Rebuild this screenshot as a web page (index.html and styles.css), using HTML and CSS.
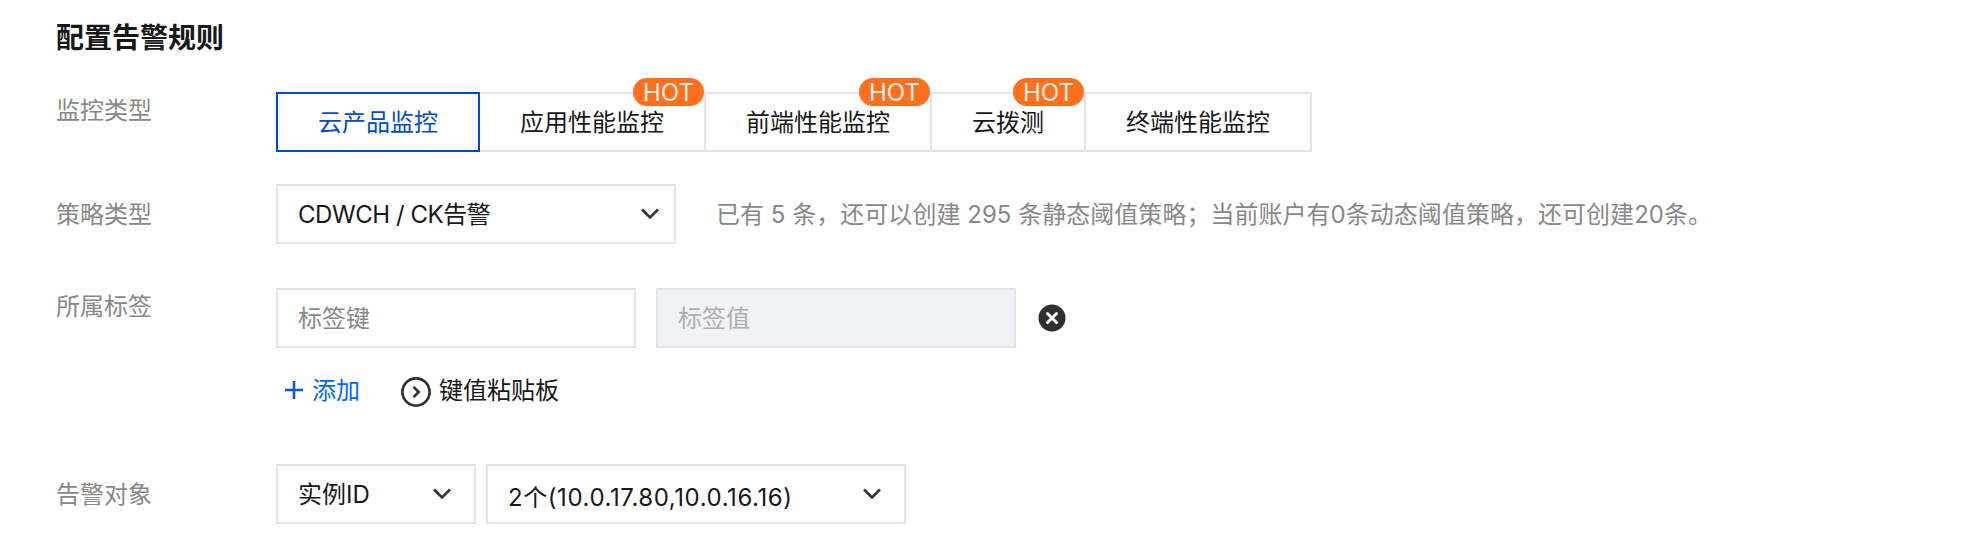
FILE: index.html
```html
<!DOCTYPE html>
<html lang="zh-CN">
<head>
    <meta charset="UTF-8">
    <title>配置告警规则</title>
    <link rel="stylesheet" href="styles.css">
</head>
<body>

    <h1>配置告警规则</h1>

    <div class="form">
        <div class="row row-type">
            <label class="label label-top">监控类型</label>
            <div class="tabs">
                <button class="tab active">云产品监控</button>
                <button class="tab">应用性能监控<span class="hot">HOT</span></button>
                <button class="tab">前端性能监控<span class="hot">HOT</span></button>
                <button class="tab">云拨测<span class="hot">HOT</span></button>
                <button class="tab">终端性能监控</button>
            </div>
        </div>

        <div class="row row-policy">
            <label class="label">策略类型</label>
            <div class="select select-policy">
                <span class="value">CDWCH / CK告警</span>
                <svg class="arrow" width="20" height="14" viewBox="0 0 20 14"><path d="M2 2.5l8 8 8-8"/></svg>
            </div>
            <p class="hint">已有 5 条，还可以创建 295 条静态阈值策略；当前账户有0条动态阈值策略，还可创建20条。</p>
        </div>

        <div class="row row-tag">
            <label class="label label-top">所属标签</label>
            <div class="tags">
                <div class="tag-line">
                    <input class="input" type="text" placeholder="标签键">
                    <input class="input" type="text" placeholder="标签值" disabled>
                    <svg class="remove" width="28" height="28" viewBox="0 0 28 28">
                        <circle cx="14" cy="14" r="13.5"/>
                        <path d="M9.5 9.5l9 9M18.5 9.5l-9 9"/>
                    </svg>
                </div>
                <div class="actions">
                    <a class="add">
                        <svg width="18" height="18" viewBox="0 0 18 18"><path d="M9 0v18M0 9h18"/></svg>
                        <span>添加</span>
                    </a>
                    <a class="paste">
                        <svg width="30" height="30" viewBox="0 0 30 30">
                            <circle cx="15" cy="15" r="13.6"/>
                            <path d="M12.5 9.8l5.2 5.2-5.2 5.2"/>
                        </svg>
                        <span>键值粘贴板</span>
                    </a>
                </div>
            </div>
        </div>

        <div class="row">
            <label class="label">告警对象</label>
            <div class="select select-id">
                <span class="value">实例ID</span>
                <svg class="arrow" width="20" height="14" viewBox="0 0 20 14"><path d="M2 2.5l8 8 8-8"/></svg>
            </div>
            <div class="select select-object">
                <span class="value">2个(10.0.17.80,10.0.16.16)</span>
                <svg class="arrow" width="20" height="14" viewBox="0 0 20 14"><path d="M2 2.5l8 8 8-8"/></svg>
            </div>
        </div>
    </div>

</body>
</html>
```

FILE: styles.css
```css
* {
    box-sizing: border-box;
}

body {
    margin: 0;
    padding: 18px 56px 0;
    background-color: #fff;
    color: #181818;
    font-family: Inter, "Noto Sans CJK SC", sans-serif;
    font-size: 24px;
    line-height: 36px;
}

h1 {
    margin: 0 0 34px;
    font-size: 28px;
    line-height: 40px;
    font-weight: 700;
}

.row {
    display: flex;
    align-items: center;
}

.row-type {
    align-items: flex-start;
    margin-bottom: 32px;
}

.row-policy {
    margin-bottom: 44px;
}

.row-tag {
    align-items: flex-start;
    margin-bottom: 55px;
}

.label {
    width: 220px;
    padding-top: 2px;
    flex: none;
    color: #888;
}

.label-top {
    padding-top: 1px;
}

.tabs {
    display: flex;
}

.tab {
    position: relative;
    height: 60px;
    padding: 2px 40px 0;
    border: 2px solid #e1e4eb;
    border-left: none;
    background-color: #fff;
    color: inherit;
    font: inherit;
    white-space: nowrap;
}

.tab.active {
    border: 2px solid #004bd0;
    color: #004bd0;
}

.hot {
    position: absolute;
    top: -16px;
    right: 0;
    width: 71px;
    height: 28px;
    border-radius: 14px;
    background-color: #ff6f1e;
    color: #fff0e8;
    line-height: 29px;
    text-align: center;
}

.select {
    display: flex;
    align-items: center;
    justify-content: space-between;
    height: 60px;
    padding: 0 14px 0 20px;
    border: 2px solid #e1e4eb;
    white-space: nowrap;
}

.select .value {
    padding-top: 2px;
}

.select-policy {
    width: 400px;
}

.select-policy .value {
    letter-spacing: -0.45px;
}

.select-id {
    width: 200px;
    padding-right: 22px;
    margin-right: 10px;
}

.select-object {
    width: 420px;
    padding-right: 22px;
}

.select-object .value {
    padding-top: 8px;
    letter-spacing: 0.57px;
}

.arrow {
    fill: none;
    stroke: #333;
    stroke-width: 2.6;
}

.hint {
    margin: 0 0 0 40px;
    padding-top: 2px;
    color: #888;
    letter-spacing: 0.03px;
    white-space: nowrap;
}

.tag-line {
    display: flex;
    align-items: center;
    gap: 20px;
}

.input {
    width: 360px;
    height: 60px;
    padding: 0 20px;
    border: 2px solid #e1e4eb;
    border-radius: 0;
    background-color: #fff;
    font: inherit;
}

.input::placeholder {
    color: #888;
}

.input:disabled {
    background-color: #f0f2f7;
}

.input:disabled::placeholder {
    color: #adaeb1;
}

.remove {
    margin-left: 2px;
    fill: #2f2f2f;
}

.remove path {
    stroke: #fff;
    stroke-width: 3;
    stroke-linecap: round;
}

.actions {
    display: flex;
    align-items: center;
    margin-top: 25px;
    padding-left: 9px;
}

.actions a {
    display: flex;
    align-items: center;
}

.actions svg {
    fill: none;
    stroke-width: 2.6;
}

.add {
    gap: 9px;
    margin-right: 41px;
    color: #0067ff;
}

.add svg {
    margin-bottom: 2px;
    stroke: #1158d8;
}

.paste {
    gap: 8px;
}

.paste svg {
    margin-top: 2px;
    stroke: #2f2f2f;
}
```
